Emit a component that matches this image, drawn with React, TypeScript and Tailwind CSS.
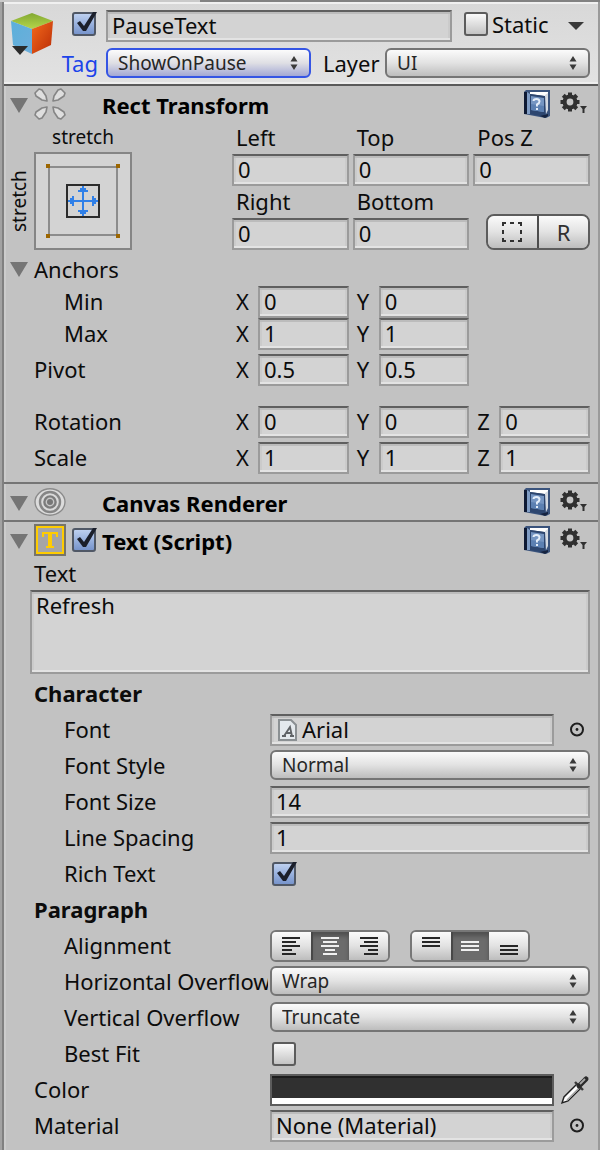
import React, { useId } from "react";

const fieldStyle =
  "h-8 min-w-0 rounded-none border-2 border-[#9b9b9b] border-t-[#5f5f5f] bg-[#d3d3d3] px-1 pb-0.5 text-[22px] leading-[26px] text-[#0c0c0c] shadow-[inset_0_2px_0_#bcbcbc,inset_0_-2px_0_#e3e3e3,inset_2px_0_0_#cbcbcb,inset_-2px_0_0_#cbcbcb] outline-none";

const buttonFill = "bg-linear-to-b from-[#fbfbfb] via-[#e2e2e2] to-[#bdbdbd]";

function Checkbox({ id, label, checked = false }: { id?: string; label?: string; checked?: boolean }) {
  return (
    <span className="relative block size-6 shrink-0">
      <input
        id={id}
        type="checkbox"
        aria-label={label}
        defaultChecked={checked}
        className="peer block size-6 appearance-none rounded-[3px] border-2 border-[#5c5c5c] bg-linear-to-b from-[#fafafa] to-[#c4c4c4] checked:border-[#505866] checked:from-[#bdd0f0] checked:to-[#7794cc]"
      />
      <svg
        viewBox="0 0 28 28"
        aria-hidden="true"
        className="pointer-events-none absolute -top-1 left-0 hidden size-7 peer-checked:block"
      >
        <path d="M5 15 L8 13 L12 18 L21 4 L25 4 L14 23 L11 23 Z" fill="#1b1f2b" />
      </svg>
    </span>
  );
}

function Popup({ id, options, focused = false }: { id: string; options: string[]; focused?: boolean }) {
  return (
    <span className="relative block min-w-0 flex-1">
      <select
        id={id}
        className={`block h-[30px] w-full appearance-none rounded-md border-2 pr-8 pl-[10px] text-[19px] leading-6 text-[#262626] outline-none ${
          focused
            ? "border-[#3555e4] bg-linear-to-b from-[#fbfbfb] via-[#dfdfe4] to-[#a4a8d4]"
            : `border-[#757575] ${buttonFill}`
        }`}
      >
        {options.map((o) => (
          <option key={o}>{o}</option>
        ))}
      </select>
      <svg
        viewBox="0 0 10 14"
        aria-hidden="true"
        className="pointer-events-none absolute top-2 right-3 h-[14px] w-[10px]"
      >
        <path d="M5 0 L8.5 5.5 H1.5 Z M5 14 L8.5 8.5 H1.5 Z" fill="#3a3a3a" />
      </svg>
    </span>
  );
}

function Row({
  label,
  htmlFor,
  nested = false,
  children,
}: {
  label: string;
  htmlFor?: string;
  nested?: boolean;
  children: React.ReactNode;
}) {
  return (
    <div className="flex h-8">
      <div
        className={`mr-0.5 w-[264px] shrink-0 overflow-hidden whitespace-nowrap ${nested ? "pl-15" : "pl-[30px]"}`}
      >
        <label htmlFor={htmlFor} className="block leading-[30px]">
          {label}
        </label>
      </div>
      {children}
    </div>
  );
}

function Foldout({ label }: { label: string }) {
  return (
    <button type="button" aria-label={label} className="block h-4 w-[18px] shrink-0">
      <svg viewBox="0 0 18 16" className="h-4 w-[18px]">
        <path d="M0 0 H18 L9 15 Z" fill="#757575" />
      </svg>
    </button>
  );
}

function HelpIcon() {
  return (
    <svg viewBox="0 0 26 28" className="h-7 w-[26px]">
      <path d="M2 0 H26 V26 L22 28 L16 27 L0 24 V2 Z" fill="#3a537c" />
      <path d="M0 2 H3 V24 H0 Z" fill="#0e1933" />
      <path d="M3 2 L6 4 V24 L3 24 Z" fill="#7f9cc4" />
      <path d="M6 2 H24 V8 L20 6 L6 4 Z" fill="#ffffff" />
      <path d="M21 5 L24 3 V20 L22 24 Z" fill="#d5dae2" />
      <path d="M6 4 L21 6 V27 L6 24 Z" fill="#2d466f" />
      <path d="M7 6 L20 8 V22 L7 20 Z" fill="#7595c2" />
      <path d="M7 14 L20 16 V22 L7 20 Z" fill="#5c80b2" />
      <path d="M16 26 L24 24 V26 L21 28 Z" fill="#16233f" />
      <path
        d="M9.5 11 Q9.5 9 12.5 9 Q15.5 9 15.5 11.5 Q15.5 13.2 13 14.5 V16.5 M13 18 V20"
        fill="none"
        stroke="#e4edf9"
        strokeWidth="2"
      />
    </svg>
  );
}

function GearIcon() {
  return (
    <svg viewBox="0 0 28 28" className="size-7">
      <g fill="#303030">
        {[0, 45, 90, 135].map((a) => (
          <rect key={a} x="8" y="2.5" width="4" height="19" transform={`rotate(${a} 10 12)`} />
        ))}
      </g>
      <circle cx="10" cy="12" r="5.5" fill="none" stroke="#303030" strokeWidth="4" />
      <circle cx="10" cy="12" r="3.4" fill="#c6c6c6" />
      <path d="M20 16 H27 L24.5 19 V23 H22.5 V19 Z" fill="#303030" />
    </svg>
  );
}

function SectionTitle({
  title,
  icon,
  toggle = false,
}: {
  title: string;
  icon: React.ReactNode;
  toggle?: boolean;
}) {
  return (
    <div className="flex h-9 items-center pr-2.5 pl-1.5">
      <span className="mr-1.5 pt-1">
        <Foldout label={`Fold ${title}`} />
      </span>
      {icon}
      <span className="ml-1.5 w-[30px]">{toggle && <Checkbox label={`Enable ${title}`} checked />}</span>
      <h2 className="flex-1 pt-0.5 leading-8 font-bold text-black">{title}</h2>
      <button type="button" aria-label={`${title} help`} className="mr-2.5">
        <HelpIcon />
      </button>
      <button type="button" aria-label={`${title} settings`}>
        <GearIcon />
      </button>
    </div>
  );
}

function AnchorIcon() {
  return (
    <svg viewBox="0 0 32 32" className="size-8 shrink-0">
      {[0, 90, 180, 270].map((a) => (
        <path
          key={a}
          d="M13 13 L12 8 L8 2 L5 1 L1 5 L2 8 L8 12 Z"
          transform={`rotate(${a} 16 16)`}
          fill="#dedede"
          stroke="#858585"
          strokeWidth="1.6"
          strokeLinejoin="round"
        />
      ))}
    </svg>
  );
}

function RendererIcon() {
  return (
    <svg viewBox="0 0 32 28" className="h-7 w-8 shrink-0">
      <ellipse cx="16" cy="14" rx="15" ry="13.2" fill="#dcdcdc" stroke="#8a8a8a" strokeWidth="1.4" />
      <circle cx="16" cy="14" r="10" fill="#dadada" stroke="#868686" strokeWidth="2.4" />
      <circle cx="16" cy="14" r="5.6" fill="#c8c8c8" stroke="#7c7c7c" strokeWidth="2.4" />
      <circle cx="16" cy="14" r="3" fill="#777777" />
    </svg>
  );
}

function TextIcon() {
  return (
    <svg viewBox="0 0 32 32" className="size-8 shrink-0">
      <rect width="32" height="32" fill="#77746a" />
      <rect x="3" y="3" width="26" height="26" fill="#a5a5a5" stroke="#ffcc00" strokeWidth="2" />
      <path
        d="M8 8 H24 V13 H22 V10 H18 V22 H20 V24 H12 V22 H14 V10 H10 V13 H8 Z"
        fill="#ffcc00"
      />
    </svg>
  );
}

function CubeIcon() {
  return (
    <svg viewBox="0 0 44 44" className="size-11">
      <defs>
        <linearGradient id="cubeTop" x1="0" y1="0" x2="0" y2="1">
          <stop offset="0" stopColor="#82a832" />
          <stop offset="1" stopColor="#b5d64a" />
        </linearGradient>
        <linearGradient id="cubeRight" x1="0" y1="0" x2="1" y2="1">
          <stop offset="0" stopColor="#f46a1c" />
          <stop offset="1" stopColor="#b92c06" />
        </linearGradient>
        <linearGradient id="cubeLeft" x1="0" y1="0" x2="1" y2="1">
          <stop offset="0" stopColor="#5bb0da" />
          <stop offset="1" stopColor="#6eaedb" />
        </linearGradient>
      </defs>
      <path d="M22 1 L43 9 L22 17 L1 9 Z" fill="url(#cubeTop)" />
      <path d="M1 9 L22 17 V42 L3 33 Z" fill="url(#cubeLeft)" />
      <path d="M43 9 L22 17 V42 L41 33 Z" fill="url(#cubeRight)" />
      <path d="M2 34 H18 L10 43 Z" fill="#2b2b2b" />
    </svg>
  );
}

function AnchorPreset() {
  return (
    <svg viewBox="0 0 98 98" className="size-[98px]">
      <rect x="1" y="1" width="96" height="96" fill="#d3d3d3" stroke="#858585" strokeWidth="2" />
      <rect x="15" y="15" width="68" height="68" fill="none" stroke="#8c8c8c" strokeWidth="2" />
      <g fill="#9c6600">
        <rect x="12" y="12" width="4" height="4" />
        <rect x="82" y="12" width="4" height="4" />
        <rect x="12" y="82" width="4" height="4" />
        <rect x="82" y="82" width="4" height="4" />
      </g>
      <rect x="33" y="33" width="32" height="32" fill="none" stroke="#2c2c2c" strokeWidth="2" />
      <path d="M49 36 V62 M36 49 H62" stroke="#3080e8" strokeWidth="2" />
      <path
        d="M48 34 H50 V36 H52 V38 H54 V40 H44 V38 H46 V36 H48 Z M48 64 H50 V62 H52 V60 H54 V58 H44 V60 H46 V62 H48 Z M34 48 V50 H36 V52 H38 V54 H40 V44 H38 V46 H36 V48 Z M64 48 V50 H62 V52 H60 V54 H58 V44 H60 V46 H62 V48 Z"
        fill="#3080e8"
      />
    </svg>
  );
}

function StackedField({ label, value }: { label: string; value: string }) {
  const id = useId();
  return (
    <div className="min-w-0">
      <label htmlFor={id} className="block h-8 pl-1 leading-[30px]">
        {label}
      </label>
      <input id={id} defaultValue={value} className={`block w-full ${fieldStyle}`} />
    </div>
  );
}

function VectorRow({ label, values, nested = false }: { label: string; values: string[]; nested?: boolean }) {
  const id = useId();
  return (
    <div className="flex h-8">
      <div className={`w-[228px] shrink-0 leading-[30px] ${nested ? "pl-15" : "pl-[30px]"}`}>{label}</div>
      <div className="mr-2 grid flex-1 grid-cols-3 gap-1">
        {values.map((v, i) => (
          <div key={i} className="flex min-w-0">
            <label htmlFor={`${id}${i}`} className="w-[26px] shrink-0 pl-1 leading-[30px]">
              {"XYZ"[i]}
            </label>
            <input
              id={`${id}${i}`}
              aria-label={`${label} ${"XYZ"[i]}`}
              defaultValue={v}
              className={`w-full ${fieldStyle}`}
            />
          </div>
        ))}
      </div>
    </div>
  );
}

function PickerButton({ label }: { label: string }) {
  return (
    <button type="button" aria-label={label} className="flex w-9 shrink-0 items-center justify-end pr-1">
      <svg viewBox="0 0 18 18" className="size-[18px]">
        <circle cx="9" cy="8.5" r="6" fill="none" stroke="#1e1e1e" strokeWidth="2" />
        <circle cx="9" cy="8.5" r="1.4" fill="#1e1e1e" />
      </svg>
    </button>
  );
}

function SegmentGroup({ label, items }: { label: string; items: { name: string; path: string }[] }) {
  return (
    <div
      role="group"
      aria-label={label}
      className="flex h-8 w-30 overflow-hidden rounded-md border-2 border-[#777777]"
    >
      {items.map((item, i) => (
        <button
          key={item.name}
          type="button"
          aria-label={item.name}
          aria-pressed={i === 1}
          className={`flex flex-1 items-center justify-center ${
            i === 1
              ? "bg-[#6c6c6c] text-[#f0f0f0] shadow-[inset_2px_0_0_#484848,inset_0_4px_4px_#505050]"
              : `text-[#262626] ${buttonFill}`
          }`}
        >
          <svg viewBox="0 0 18 18" className="size-[18px]">
            <path d={item.path} stroke="currentColor" strokeWidth="2" />
          </svg>
        </button>
      ))}
    </div>
  );
}

const horizontalAlign = [
  { name: "Align left", path: "M0 1H18M0 5H14M0 9H18M0 13H10M0 17H14" },
  { name: "Align center", path: "M0 1H18M2 5H16M0 9H18M4 13H14M2 17H16" },
  { name: "Align right", path: "M0 1H18M4 5H18M0 9H18M8 13H18M4 17H18" },
];

const verticalAlign = [
  { name: "Align top", path: "M0 1H18M0 5H18M0 9H18" },
  { name: "Align middle", path: "M0 5H18M0 9H18M0 13H18" },
  { name: "Align bottom", path: "M0 9H18M0 13H18M0 17H18" },
];

export default function App() {
  return (
    <div className="flex min-h-screen flex-col bg-[#c2c2c2] font-['Noto_Sans',sans-serif] text-[22px] text-[#0c0c0c]">
      <div className="flex h-0.5">
        <div className="w-1/3 bg-[#cacaca]" />
        <div className="flex-1 bg-[#828282]" />
      </div>
      <div className="flex flex-1 border-r-2 border-l-2 border-r-[#9a9a9a] border-l-[#a2a2a2]">
        <main className="min-w-0 flex-1 border-l-2 border-[#808080] shadow-[inset_2px_0_0_#cccccc]">
          <header className="flex h-[84px] border-t-2 border-b-2 border-t-[#f0f0f0] border-b-[#5a5a5a] bg-linear-to-b from-[#d8d8d8] to-[#e2e2e2] pr-2 pl-1.5 shadow-[inset_0_-2px_0_#eeeeee]">
            <div className="w-12 shrink-0 pt-2">
              <CubeIcon />
            </div>
            <div className="flex min-w-0 flex-1 flex-col gap-1.5 pt-1.5">
              <div className="flex items-start">
                <span className="w-12 shrink-0 pt-0.5 pl-3.5">
                  <Checkbox label="Active" checked />
                </span>
                <input aria-label="Name" defaultValue="PauseText" className={`flex-1 ${fieldStyle}`} />
                <span className="mr-1 ml-3 pt-0.5">
                  <Checkbox id="static" />
                </span>
                <label htmlFor="static" className="w-[74px] leading-7">
                  Static
                </label>
                <button type="button" aria-label="Static options" className="mr-1 w-5 self-center">
                  <svg viewBox="0 0 20 10" className="h-2.5 w-5">
                    <path d="M2 1 H18 L10 9 Z" fill="#3a3a3a" />
                  </svg>
                </button>
              </div>
              <div className="flex items-center">
                <label htmlFor="tag" className="w-12 shrink-0 pr-2 text-right leading-[30px] text-[#1c44ea]">
                  Tag
                </label>
                <Popup id="tag" options={["ShowOnPause", "Untagged"]} focused />
                <label htmlFor="layer" className="w-[74px] shrink-0 pl-3 leading-[30px]">
                  Layer
                </label>
                <Popup id="layer" options={["UI", "Default"]} />
              </div>
            </div>
          </header>

          <section className="border-b-2 border-[#757575] pb-2">
            <SectionTitle title="Rect Transform" icon={<AnchorIcon />} />
            <div className="flex">
              <div className="grid w-[228px] shrink-0 grid-cols-[30px_98px] grid-rows-[30px_98px] content-start text-[19px]">
                <span className="col-start-2 text-center leading-[30px]">stretch</span>
                <span className="col-start-1 rotate-180 text-center leading-[30px] [writing-mode:vertical-rl]">
                  stretch
                </span>
                <button type="button" aria-label="Anchor presets">
                  <AnchorPreset />
                </button>
              </div>
              <div className="mr-2 grid flex-1 grid-cols-3 gap-x-1">
                <StackedField label="Left" value="0" />
                <StackedField label="Top" value="0" />
                <StackedField label="Pos Z" value="0" />
                <StackedField label="Right" value="0" />
                <StackedField label="Bottom" value="0" />
                <div className="flex items-end justify-end">
                  <div className="flex h-9 w-[104px] overflow-hidden rounded-lg border-2 border-[#5c5c5c]">
                    <button
                      type="button"
                      aria-label="Blueprint mode"
                      className={`flex flex-1 items-center justify-center border-r-2 border-[#4c4c4c] ${buttonFill}`}
                    >
                      <svg viewBox="0 0 20 20" className="size-5">
                        <path
                          d="M0 4V0H4V2H2V4Z M16 0H20V4H18V2H16Z M0 16H2V18H4V20H0Z M18 16H20V20H16V18H18Z M8 0H12V2H8Z M8 18H12V20H8Z M0 8H2V12H0Z M18 8H20V12H18Z"
                          fill="#303030"
                        />
                      </svg>
                    </button>
                    <button
                      type="button"
                      aria-label="Raw edit mode"
                      className={`flex-1 text-[22px] leading-8 text-[#303030] ${buttonFill}`}
                    >
                      R
                    </button>
                  </div>
                </div>
              </div>
            </div>
            <div className="mt-1 flex h-8 items-center pl-1.5">
              <Foldout label="Fold Anchors" />
              <span className="ml-1.5 h-8 leading-[30px]">Anchors</span>
            </div>
            <VectorRow label="Min" values={["0", "0"]} nested />
            <VectorRow label="Max" values={["1", "1"]} nested />
            <div className="mt-1 flex flex-col">
              <VectorRow label="Pivot" values={["0.5", "0.5"]} />
            </div>
            <div className="mt-5 flex flex-col gap-1">
              <VectorRow label="Rotation" values={["0", "0", "0"]} />
              <VectorRow label="Scale" values={["1", "1", "1"]} />
            </div>
          </section>

          <section className="border-b-2 border-[#757575]">
            <SectionTitle title="Canvas Renderer" icon={<RendererIcon />} />
          </section>

          <section className="pb-2">
            <SectionTitle title="Text (Script)" icon={<TextIcon />} toggle />
            <label htmlFor="text" className="block h-8 pl-[30px] leading-[30px]">
              Text
            </label>
            <div className="mr-2 mb-1 ml-[26px] flex">
              <textarea
                id="text"
                defaultValue="Refresh"
                className={`block h-[84px]! w-full resize-none ${fieldStyle}`}
              />
            </div>
            <div className="mr-2 flex flex-col gap-1">
              <h3 className="h-8 pl-[30px] leading-[30px] font-bold">Character</h3>
              <Row label="Font" htmlFor="font" nested>
                <button id="font" type="button" className={`flex flex-1 items-center ${fieldStyle}`}>
                  <svg viewBox="0 0 22 24" className="mr-1 h-6 w-[22px] shrink-0">
                    <path d="M3 3 H15 L20 8 V23 H3 Z" fill="#e4e9ed" stroke="#8b9093" strokeWidth="2" />
                    <path
                      d="M8 19 L14 10 L16 19 M10 16 H15 M6 19 H10 M14 19 H18"
                      fill="none"
                      stroke="#606467"
                      strokeWidth="1.8"
                    />
                  </svg>
                  Arial
                </button>
                <PickerButton label="Choose font" />
              </Row>
              <Row label="Font Style" htmlFor="style" nested>
                <Popup id="style" options={["Normal", "Bold", "Italic"]} />
              </Row>
              <Row label="Font Size" htmlFor="size" nested>
                <input id="size" defaultValue="14" className={`flex-1 ${fieldStyle}`} />
              </Row>
              <Row label="Line Spacing" htmlFor="spacing" nested>
                <input id="spacing" defaultValue="1" className={`flex-1 ${fieldStyle}`} />
              </Row>
              <Row label="Rich Text" htmlFor="rich" nested>
                <span className="pt-1 pl-0.5">
                  <Checkbox id="rich" checked />
                </span>
              </Row>
              <h3 className="h-8 pl-[30px] leading-[30px] font-bold">Paragraph</h3>
              <Row label="Alignment" nested>
                <div className="flex gap-5">
                  <SegmentGroup label="Horizontal alignment" items={horizontalAlign} />
                  <SegmentGroup label="Vertical alignment" items={verticalAlign} />
                </div>
              </Row>
              <Row label="Horizontal Overflow" htmlFor="hover" nested>
                <Popup id="hover" options={["Wrap", "Overflow"]} />
              </Row>
              <Row label="Vertical Overflow" htmlFor="vover" nested>
                <Popup id="vover" options={["Truncate", "Overflow"]} />
              </Row>
              <Row label="Best Fit" htmlFor="fit" nested>
                <span className="pt-1 pl-0.5">
                  <Checkbox id="fit" />
                </span>
              </Row>
              <Row label="Color" htmlFor="color">
                <button
                  id="color"
                  type="button"
                  className="flex-1 border-2 border-[#5c5c5c] bg-[#303030] shadow-[inset_0_-6px_0_#ffffff,inset_0_2px_0_#1c1c1c]"
                />
                <button
                  type="button"
                  aria-label="Pick color from screen"
                  className="flex w-9 shrink-0 items-center justify-end"
                >
                  <svg viewBox="0 0 30 30" className="size-[30px]">
                    <path d="M2 28 L4 22 L17 9 L21 13 L8 26 Z" fill="#ffffff" stroke="#202020" strokeWidth="1.4" />
                    <path d="M7 25 L20 12" stroke="#a0a0a0" strokeWidth="1.2" />
                    <path d="M15 7 L23 15" stroke="#3a3a3a" strokeWidth="2.4" />
                    <path d="M19 11 L26 4" stroke="#2a2a2a" strokeWidth="5" strokeLinecap="round" />
                    <path d="M20 9 L25 4" stroke="#a8a8a8" strokeWidth="1.8" />
                  </svg>
                </button>
              </Row>
              <Row label="Material" htmlFor="material">
                <button id="material" type="button" className={`flex-1 text-left ${fieldStyle}`}>
                  None (Material)
                </button>
                <PickerButton label="Choose material" />
              </Row>
            </div>
          </section>
        </main>
      </div>
    </div>
  );
}
